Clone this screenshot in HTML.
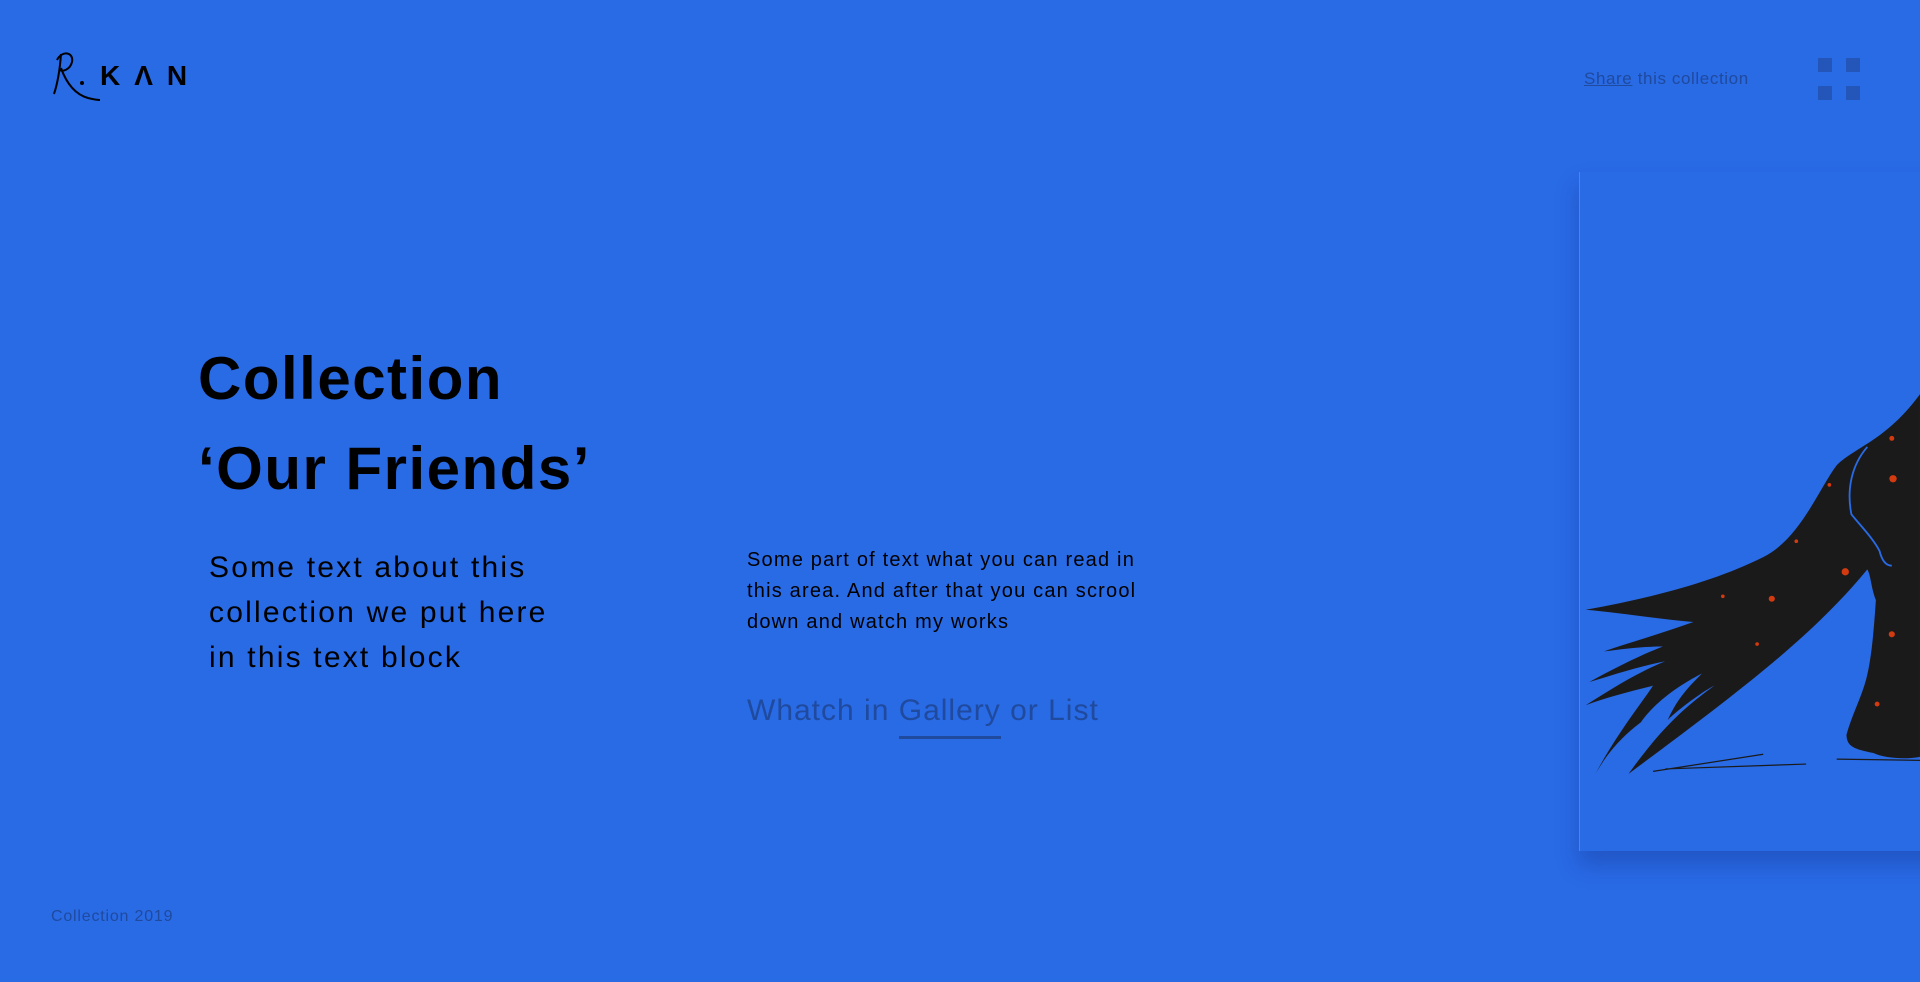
<!DOCTYPE html>
<html><head><meta charset="utf-8"><style>
*{margin:0;padding:0;box-sizing:border-box}
body{width:1920px;height:982px;background:#296AE5;font-family:"Liberation Sans",sans-serif;position:relative;overflow:hidden}
.a{position:absolute;white-space:nowrap}
.sq{position:absolute;width:14px;height:14px;background:#2455B8}
</style></head><body>
<svg class="a" style="left:48px;top:48px" width="70" height="62" viewBox="0 0 70 62">
<path d="M6 46 C10 34 12 20 13 6 M9 12 C14 2 26 4 24 14 C22 22 14 24 12 22 M13 20 C18 34 26 46 40 50 C44 51 48 52 52 52" fill="none" stroke="#000" stroke-width="2"/>
<circle cx="34" cy="35" r="2" fill="#000"/>
</svg>
<div class="a" style="left:100px;top:60px;font-size:28px;font-weight:bold;letter-spacing:14px;color:#000">K&#923;N</div>
<div class="a" style="left:1584px;top:69px;font-size:17px;letter-spacing:0.6px;color:#1F4A9E"><span style="text-decoration:underline">Share</span> this collection</div>
<div class="sq" style="left:1818px;top:58px"></div><div class="sq" style="left:1846px;top:58px"></div>
<div class="sq" style="left:1818px;top:86px"></div><div class="sq" style="left:1846px;top:86px"></div>
<div class="a" style="left:198px;top:334px;font-size:60px;font-weight:bold;color:#000;line-height:90px;letter-spacing:1.5px">Collection<br>‘Our Friends’</div>
<div class="a" style="left:209px;top:545px;font-size:30px;color:#000;line-height:45px;letter-spacing:2.2px">Some text about this<br>collection we put here<br>in this text block</div>
<div class="a" style="left:747px;top:545px;font-size:20px;color:#000;line-height:31px;letter-spacing:1.2px">Some part of text what you can read in<br>this area. And after that you can scrool<br>down and watch my works</div>
<div class="a" style="left:747px;top:694px;font-size:30px;color:#1F4A9E;letter-spacing:1px">Whatch in <span style="position:relative">Gallery<span style="position:absolute;left:0;right:0;top:42px;height:3px;background:#1F4A9E"></span></span> or List</div>
<div class="a" style="left:51px;top:908px;font-size:16px;color:#1F4A9E;letter-spacing:0.8px">Collection 2019</div>
<div class="a" style="left:1579px;top:172px;width:400px;height:679px;background:#296AE5;border-left:1px solid #4a84ec;box-shadow:0 14px 20px rgba(20,50,140,0.35)"></div>
<svg class="a" style="left:0;top:0" width="1920" height="982" viewBox="0 0 1568 802">
<path d="M1295 498 C1350 488 1400 475 1440 455 C1470 440 1485 400 1500 380 C1515 365 1540 360 1568 322 L1568 618 C1560 620 1540 620 1530 615 C1515 612 1508 610 1508 600 C1512 585 1520 570 1524 555 C1528 540 1530 520 1532 490 C1528 480 1528 470 1525 465 C1480 520 1420 565 1330 632 C1360 590 1380 575 1400 560 C1390 565 1370 580 1362 588 C1370 570 1380 560 1390 550 C1370 560 1350 575 1340 590 C1320 605 1310 620 1303 632 C1320 600 1340 575 1350 560 C1330 565 1310 570 1295 576 C1320 560 1340 548 1360 540 C1335 545 1315 552 1298 557 C1320 545 1340 535 1358 528 C1340 528 1325 530 1310 532 C1330 525 1355 518 1383 508 C1350 505 1320 500 1295 498Z" fill="#1a1a1a"/>
<path d="M1525 365 C1512 380 1508 400 1512 420 C1520 430 1530 440 1535 450 C1537 458 1540 462 1545 462" fill="none" stroke="#296AE5" stroke-width="1.5"/>
<path d="M1350 630 L1440 616 M1360 628 L1475 624 M1500 620 L1568 621" stroke="#1a1a1a" stroke-width="1"/>
<g fill="#d23a10"><circle cx="1546" cy="391" r="3"/><circle cx="1507" cy="467" r="3"/><circle cx="1447" cy="489" r="2.5"/><circle cx="1545" cy="518" r="2.5"/><circle cx="1533" cy="575" r="2"/><circle cx="1545" cy="358" r="2"/><circle cx="1467" cy="442" r="1.5"/><circle cx="1407" cy="487" r="1.5"/><circle cx="1435" cy="526" r="1.5"/><circle cx="1494" cy="396" r="1.5"/></g>
</svg>
</body></html>
